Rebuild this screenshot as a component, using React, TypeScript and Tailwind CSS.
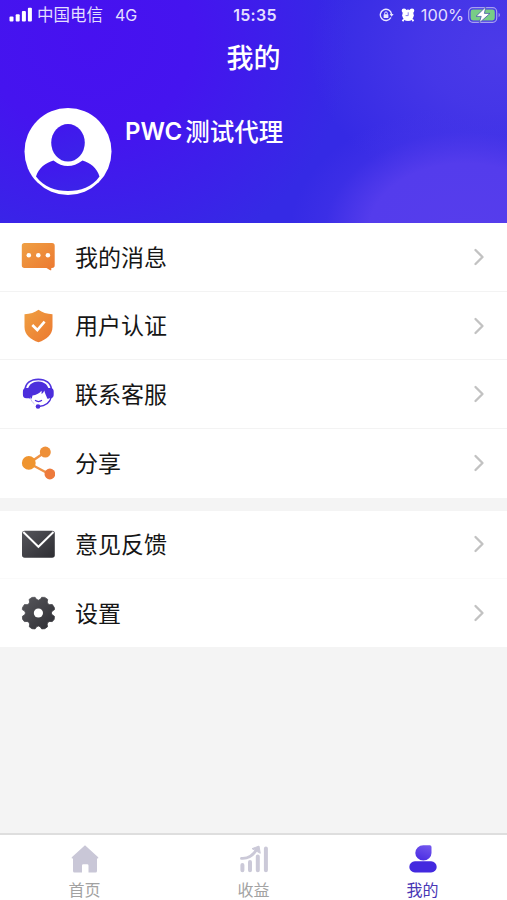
import React, { useState } from 'react';
import { ChevronRight } from 'lucide-react';

interface IconProps {
  className?: string;
}

const SignalIcon = () => (
  <svg width="24" height="16" viewBox="0 0 24 16" fill="#fff">
    <rect x="0.5" y="9.5" width="4" height="5" rx="1" />
    <rect x="6.7" y="7.3" width="4" height="7.2" rx="1" />
    <rect x="12.9" y="4" width="4" height="10.5" rx="1" />
    <rect x="18.9" y="0.7" width="4" height="13.8" rx="1" />
  </svg>
);

const RotationLockIcon = () => (
  <svg width="15" height="14" viewBox="0 0 15 14" fill="none">
    <path d="M11.9 9.5A5.6 5.6 0 1 1 12.5 6.2" stroke="#e9e6ff" strokeWidth="1.4" />
    <path d="M10.6 6h4l-2 2.8z" fill="#e9e6ff" />
    <rect x="4.6" y="6.3" width="4.8" height="3.8" rx="0.5" fill="#e9e6ff" />
    <path d="M5.7 6.5V5.2a1.3 1.3 0 0 1 2.6 0v1.3" stroke="#e9e6ff" strokeWidth="1" />
  </svg>
);

const AlarmIcon = () => (
  <svg width="14" height="14" viewBox="0 0 14 14">
    <circle cx="3" cy="2.8" r="2.3" fill="#fff" />
    <circle cx="11" cy="2.8" r="2.3" fill="#fff" />
    <path d="M2.8 11.3 1.6 13.2M11.2 11.3l1.2 1.9" stroke="#fff" strokeWidth="1.8" />
    <circle cx="7" cy="7.3" r="5.8" fill="#fff" />
    <path d="M7.2 4.3v3.3H4.6" stroke="#7a70ea" strokeWidth="0.9" fill="none" />
  </svg>
);

const BatteryIcon = () => (
  <svg width="33" height="18" viewBox="0 0 33 18">
    <rect x="0.7" y="1.7" width="28" height="14.6" rx="4" fill="none" stroke="#a7a0f0" strokeWidth="1.2" />
    <rect x="2.6" y="3.6" width="24.2" height="10.8" rx="2.3" fill="#78cd86" />
    <path d="M30.6 6.8c1.7.8 1.7 3.6 0 4.4z" fill="#a7a0f0" />
    <path d="M17.8.8 8 10.4h5.2l-2 6.6L22 7.4h-5.6z" fill="#fff" stroke="#4a5aa8" strokeWidth="0.8" strokeLinejoin="round" />
  </svg>
);

const Avatar = () => (
  <svg width="88" height="88" viewBox="0 0 88 88">
    <defs>
      <linearGradient id="avatarFill" x1="0" y1="0" x2="0.3" y2="1">
        <stop offset="0" stopColor="#4216ee" />
        <stop offset="1" stopColor="#3c22e9" />
      </linearGradient>
    </defs>
    <circle cx="44" cy="43.5" r="43.5" fill="#fff" />
    <ellipse cx="44" cy="34.8" rx="16.8" ry="18.8" fill="url(#avatarFill)" />
    <path d="M29.5 52.5Q43.5 63.5 58.5 52.5C66 54.5 73 60 75.5 68.5C68 79 56.5 83 44 83S20 79 12 68.5C14.5 60 22 54.5 29.5 52.5Z" fill="url(#avatarFill)" />
  </svg>
);

const MessageIcon = ({ className }: IconProps) => (
  <svg className={className} viewBox="0 0 34 34">
    <defs>
      <linearGradient id="messageFill" x1="0" y1="0" x2="1" y2="1">
        <stop offset="0" stopColor="#efa044" />
        <stop offset="1" stopColor="#ec7830" />
      </linearGradient>
    </defs>
    <path d="M3.5 3H31A2.7 2.7 0 0 1 33.7 5.7V25.2A2.7 2.7 0 0 1 31 27.9H30.3V29.5Q30.3 30.7 29.2 30.2L25.5 27.9H3.5A2.7 2.7 0 0 1 .8 25.2V5.7A2.7 2.7 0 0 1 3.5 3Z" fill="url(#messageFill)" />
    <circle cx="7.8" cy="15.3" r="2.3" fill="#fff" />
    <circle cx="17.3" cy="15.3" r="2.3" fill="#fff" />
    <circle cx="26.9" cy="15.3" r="2.3" fill="#fff" />
  </svg>
);

const ShieldIcon = ({ className }: IconProps) => (
  <svg className={className} viewBox="0 0 34 34">
    <defs>
      <linearGradient id="shieldFill" x1="0" y1="0" x2="1" y2="1">
        <stop offset="0" stopColor="#efa042" />
        <stop offset="1" stopColor="#ec7830" />
      </linearGradient>
    </defs>
    <path d="M17.5 .8C21 3.6 26 5 31.5 5.2V18C31.5 25.5 25.5 30.5 17.5 33.3C9.5 30.5 3.5 25.5 3.5 18V5.2C9 5 14 3.6 17.5 .8Z" fill="url(#shieldFill)" />
    <path d="m11.3 16 5 5 7.3-8.3" fill="none" stroke="#fff" strokeWidth="2.6" />
  </svg>
);

const ServiceIcon = ({ className }: IconProps) => (
  <svg className={className} viewBox="0 0 34 34" fill="none">
    <path d="M4 13C4.5 6 10 2.3 17.3 2.3S30 6 30.5 13" stroke="#5135df" strokeWidth="1.7" />
    <path d="M6.5 19V15C6.5 8.5 11 4.4 17.3 4.4S28.1 8.5 28.1 15V21.5H26.3C25.3 18.5 23.8 16.5 23.3 13.5C22.6 15.3 21.6 16.3 20.5 17C20.6 15.8 20.7 14.8 20.5 13.7C18 16.8 15 18 11.5 18.5L10.8 21.5H8.6Z" fill="#4c2edc" />
    <path d="M8 11H5.4A3.6 3.6 0 0 0 1.9 14.8V17.5A3.6 3.6 0 0 0 5.4 21.3H9ZM26.6 11H29.2A3.6 3.6 0 0 1 32.7 14.8V17.5A3.6 3.6 0 0 1 29.2 21.3H25.9Z" fill="#4c2edc" />
    <path d="M9.5 20.5C10 23.5 11.5 25.5 13.5 27" stroke="#b9aef1" strokeWidth="0.8" />
    <path d="M30.3 20C29 25.5 24.5 29 17.5 29.5" stroke="#4c2edc" strokeWidth="1.3" />
    <path d="M14 23.3Q17.5 25.8 21 23.3" stroke="#4c2edc" strokeWidth="1.2" />
    <circle cx="17" cy="29.5" r="2.3" fill="#4c2edc" />
  </svg>
);

const ShareIcon = ({ className }: IconProps) => (
  <svg className={className} viewBox="0 0 34 34">
    <path d="M24 6.3 8 17.2 28.5 28.3" fill="none" stroke="#ee9347" strokeWidth="2.4" />
    <circle cx="24.3" cy="6.1" r="5.5" fill="#ee9039" />
    <circle cx="7.8" cy="16.9" r="6.9" fill="#ef942f" />
    <circle cx="28.9" cy="28" r="5.4" fill="#ed7a3c" />
  </svg>
);

const MailIcon = ({ className }: IconProps) => (
  <svg className={className} viewBox="0 0 34 34">
    <defs>
      <linearGradient id="mailFill" x1="0" y1="0" x2="1" y2="1">
        <stop offset="0" stopColor="#55555b" />
        <stop offset="1" stopColor="#2d2d32" />
      </linearGradient>
    </defs>
    <rect x="1" y="3.7" width="32.8" height="27" rx="2.7" fill="url(#mailFill)" />
    <path d="M2.3 5 17.4 19.8 32.5 5" fill="none" stroke="#fff" strokeWidth="1.9" />
  </svg>
);

const GearIcon = ({ className }: IconProps) => (
  <svg className={className} viewBox="0 0 34 34">
    <defs>
      <linearGradient id="gearFill" x1="0" y1="0" x2="1" y2="1">
        <stop offset="0" stopColor="#58585d" />
        <stop offset="1" stopColor="#2d2d32" />
      </linearGradient>
    </defs>
    <path
      d="M10.6 1.4L13.7 1.3Q15 4.2 17 4.2T20.3 1.3L23.4 1.4L26.3 3.4Q25.2 6.5 26.5 7.8T30.9 8.5L32.9 11.5L33.1 13.6Q29.9 15.2 29.9 17T33 20.3L32.8 23.3L30.9 25.6Q27.8 25 26.5 26.3T26.1 30.8L23.4 32.7L20.3 32.9Q18.9 30 17 30T13.7 32.9L10.6 32.7L7.9 30.8Q8.7 27.6 7.5 26.3T3 25.6L1.2 23.3L1 20.3Q4.1 18.9 4.1 17T.9 13.6L1.1 11.5L3.1 8.5Q6.2 9.1 7.5 7.8T7.7 3.4Z"
      fill="url(#gearFill)"
      stroke="url(#gearFill)"
      strokeWidth="0.8"
      strokeLinejoin="round"
      transform="translate(.4 0)"
    />
    <circle cx="17.4" cy="17" r="4.6" fill="#fff" />
  </svg>
);

const HomeIcon = ({ className }: IconProps) => (
  <svg className={className} width="28" height="28" viewBox="0 0 28 28" fill="#c9c7d7">
    <path d="M14 .3 27.2 12.3Q27.8 13.6 26.5 13.6H26V26Q26 27.5 24.5 27.5H17.5V20.5Q17.5 19.2 16.2 19.2H12.3Q11 19.2 11 20.5V27.5H3.5Q2 27.5 2 26V13.6H1.5Q.2 13.6.8 12.3Z" />
  </svg>
);

const EarningsIcon = ({ className }: IconProps) => (
  <svg className={className} width="30" height="28" viewBox="0 0 30 28" fill="none" stroke="#cbc9d8" strokeWidth="4" strokeLinecap="round">
    <path d="M3.4 20V25.3M11 17V25.3M18.8 11.5V25.3M26.9 3.6V25.3" />
    <path d="M2.5 13.3C9 13.8 14 10.5 17.5 4.8" strokeWidth="2.8" />
    <path d="m13.4 3.5 6.6-2.4 1.2 6.8Z" fill="#cbc9d8" strokeWidth="1" strokeLinejoin="round" />
  </svg>
);

const MineIcon = ({ className }: IconProps) => (
  <svg className={className} width="28" height="28" viewBox="0 0 28 28">
    <defs>
      <linearGradient id="mineFill" x1="0.7" y1="0" x2="0.3" y2="1">
        <stop offset="0" stopColor="#7155ed" />
        <stop offset="1" stopColor="#4a2ce2" />
      </linearGradient>
    </defs>
    <path d="M14.3 .3H20.8Q22.5 .3 22.5 2V8A8.1 7.6 0 0 1 6.3 8A8 7.7 0 0 1 14.3 .3Z" fill="url(#mineFill)" />
    <rect x=".3" y="16.3" width="27.4" height="11.2" rx="5.6" fill="#4329df" />
  </svg>
);

const menuGroups = [
  [
    { id: 'messages', label: '我的消息', icon: MessageIcon },
    { id: 'verify', label: '用户认证', icon: ShieldIcon },
    { id: 'service', label: '联系客服', icon: ServiceIcon },
    { id: 'share', label: '分享', icon: ShareIcon },
  ],
  [
    { id: 'feedback', label: '意见反馈', icon: MailIcon },
    { id: 'settings', label: '设置', icon: GearIcon },
  ],
];

const tabs = [
  { id: 'home', label: '首页', icon: HomeIcon },
  { id: 'earnings', label: '收益', icon: EarningsIcon },
  { id: 'mine', label: '我的', icon: MineIcon },
];

const StatusBar = () => (
  <div className="grid h-[30px] grid-cols-[1fr_auto_1fr] items-center pr-[6px] pl-[9px] text-[16px] text-[#e3dfff]">
    <div className="flex items-center">
      <SignalIcon />
      <span className="ml-[4px] text-[16.5px]">中国电信</span>
      <span className="ml-[12px]">4G</span>
    </div>
    <span className="text-[16px] font-semibold tracking-[0.3px]">15:35</span>
    <div className="flex items-center justify-end">
      <RotationLockIcon />
      <span className="ml-[7px]"><AlarmIcon /></span>
      <span className="ml-[6px] text-[16.3px]">100%</span>
      <span className="ml-[4px]"><BatteryIcon /></span>
    </div>
  </div>
);

export default function App() {
  const [activeTab, setActiveTab] = useState('mine');

  return (
    <div className="flex h-[900px] w-full flex-col overflow-hidden bg-[#f4f4f4] font-['Inter','Noto_Sans_CJK_SC',sans-serif]">
      {/* Header */}
      <header className="h-[223px] shrink-0 bg-[radial-gradient(ellipse_175px_125px_at_465px_232px,#563dec_0%,#543cec_55%,#4535e866_80%,transparent_100%),radial-gradient(ellipse_190px_150px_at_500px_50px,#4b3ae8_0%,#4939e8cc_40%,transparent_100%),radial-gradient(ellipse_260px_235px_at_90px_40px,#4711f0_0%,#4514ef_40%,#352ae5_100%)]">
        <StatusBar />
        <h1 className="flex h-[58px] items-center justify-center text-[27px] font-medium text-white">我的</h1>
        <div className="flex px-6 pt-[20px]">
          <Avatar />
          <div className="ml-[13px] flex h-[48px] items-center text-white">
            <span className="text-[24px] font-semibold">PWC</span>
            <span className="ml-[3px] text-[24.5px] font-medium">测试代理</span>
          </div>
        </div>
      </header>

      {/* Menu */}
      <main className="flex flex-1 flex-col gap-[13px]">
        {menuGroups.map((group, i) => (
          <div key={i} className="divide-y divide-[#f3f3f3] bg-white last:divide-[#fafafa]">
            {group.map((item) => (
              <button key={item.id} className={`flex w-full items-center pr-[14px] pl-[21px] text-left ${i === 0 ? 'h-[68.7px]' : 'h-[68px]'}`}>
                <item.icon className="h-[34px] w-[34px] shrink-0" />
                <span className="ml-[20px] flex-1 pt-[2px] text-[23px] text-[#161616]">{item.label}</span>
                <ChevronRight size={28} strokeWidth={2} className="text-[#c2c2c2]" />
              </button>
            ))}
          </div>
        ))}
      </main>

      {/* Tab bar */}
      <nav className="flex h-[67px] shrink-0 border-t-2 border-[#dedede] bg-white">
        {tabs.map((tab) => (
          <button
            key={tab.id}
            onClick={() => setActiveTab(tab.id)}
            className={`flex flex-1 flex-col items-center pt-[10px] text-[16px] leading-[20px] ${activeTab === tab.id ? 'text-[#4937b5]' : 'text-[#a2a2a2]'}`}
          >
            <tab.icon className="shrink-0" />
            <span className="mt-[7px]">{tab.label}</span>
          </button>
        ))}
      </nav>
    </div>
  );
}
